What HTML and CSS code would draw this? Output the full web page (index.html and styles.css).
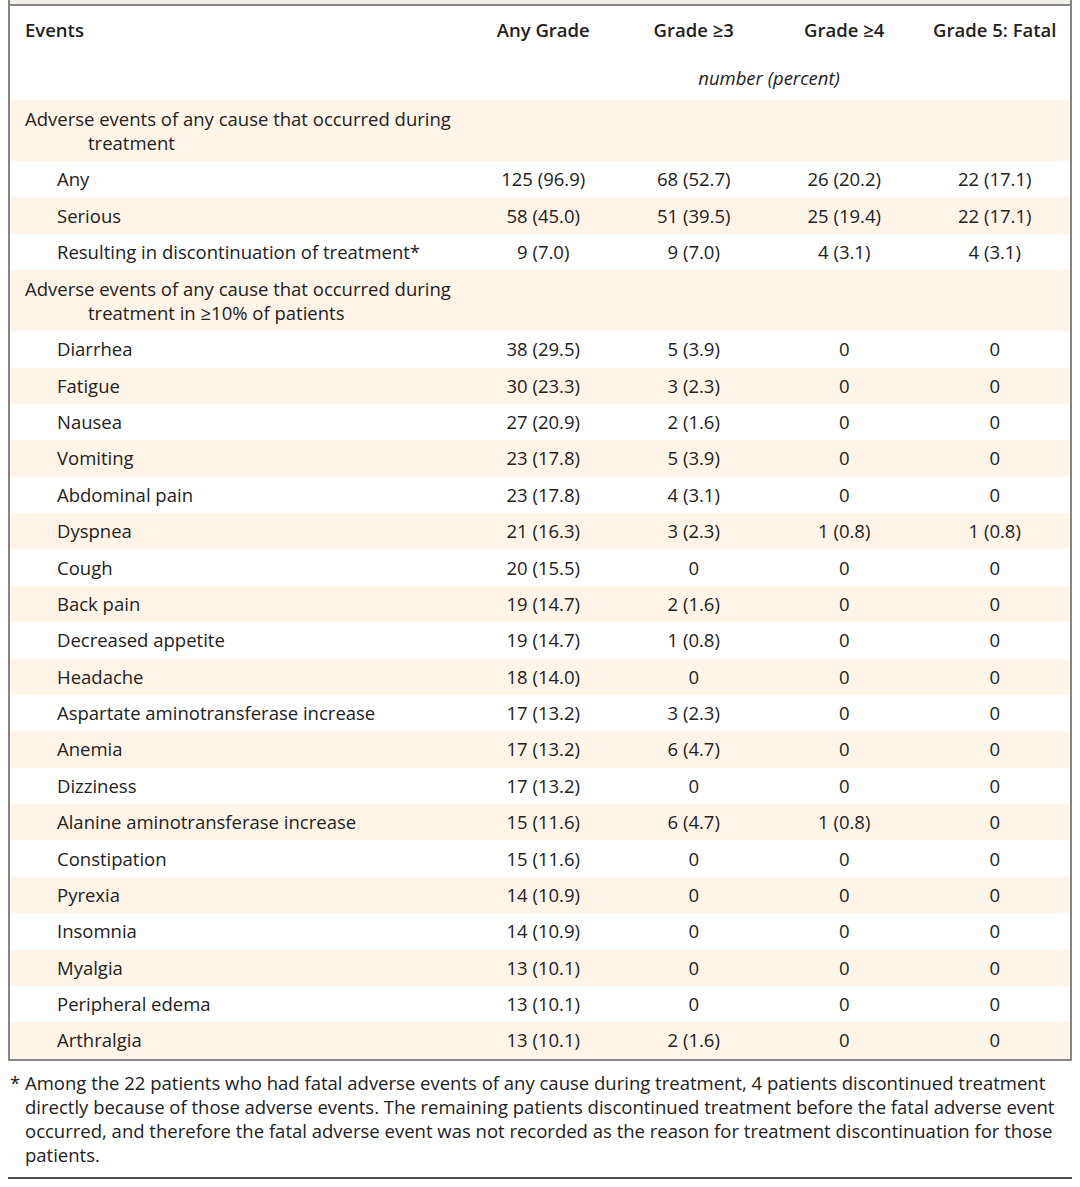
FILE: index.html
```html
<!DOCTYPE html>
<html>
<head>
<meta charset="utf-8">
<link rel="stylesheet" href="styles.css">
</head>
<body>
<div class="box">
  <div class="strip"></div>
  <table class="ae">
    <colgroup>
      <col class="c-label"><col class="c-num"><col class="c-num"><col class="c-num"><col class="c-num">
    </colgroup>
    <thead>
      <tr class="h1">
        <th class="lab">Events</th>
        <th>Any Grade</th>
        <th>Grade ≥3</th>
        <th>Grade ≥4</th>
        <th>Grade 5: Fatal</th>
      </tr>
      <tr class="h2">
        <th></th>
        <th colspan="4" class="unit">number (percent)</th>
      </tr>
    </thead>
    <tbody>
      <tr class="sec cream"><td class="lab" colspan="5">Adverse events of any cause that occurred during<br>treatment</td></tr>
      <tr><td class="sub">Any</td><td>125 (96.9)</td><td>68 (52.7)</td><td>26 (20.2)</td><td>22 (17.1)</td></tr>
      <tr class="cream"><td class="sub">Serious</td><td>58 (45.0)</td><td>51 (39.5)</td><td>25 (19.4)</td><td>22 (17.1)</td></tr>
      <tr><td class="sub">Resulting in discontinuation of treatment*</td><td>9 (7.0)</td><td>9 (7.0)</td><td>4 (3.1)</td><td>4 (3.1)</td></tr>
      <tr class="sec cream"><td class="lab" colspan="5">Adverse events of any cause that occurred during<br>treatment in ≥10% of patients</td></tr>
      <tr><td class="sub">Diarrhea</td><td>38 (29.5)</td><td>5 (3.9)</td><td>0</td><td>0</td></tr>
      <tr class="cream"><td class="sub">Fatigue</td><td>30 (23.3)</td><td>3 (2.3)</td><td>0</td><td>0</td></tr>
      <tr><td class="sub">Nausea</td><td>27 (20.9)</td><td>2 (1.6)</td><td>0</td><td>0</td></tr>
      <tr class="cream"><td class="sub">Vomiting</td><td>23 (17.8)</td><td>5 (3.9)</td><td>0</td><td>0</td></tr>
      <tr><td class="sub">Abdominal pain</td><td>23 (17.8)</td><td>4 (3.1)</td><td>0</td><td>0</td></tr>
      <tr class="cream"><td class="sub">Dyspnea</td><td>21 (16.3)</td><td>3 (2.3)</td><td>1 (0.8)</td><td>1 (0.8)</td></tr>
      <tr><td class="sub">Cough</td><td>20 (15.5)</td><td>0</td><td>0</td><td>0</td></tr>
      <tr class="cream"><td class="sub">Back pain</td><td>19 (14.7)</td><td>2 (1.6)</td><td>0</td><td>0</td></tr>
      <tr><td class="sub">Decreased appetite</td><td>19 (14.7)</td><td>1 (0.8)</td><td>0</td><td>0</td></tr>
      <tr class="cream"><td class="sub">Headache</td><td>18 (14.0)</td><td>0</td><td>0</td><td>0</td></tr>
      <tr><td class="sub">Aspartate aminotransferase increase</td><td>17 (13.2)</td><td>3 (2.3)</td><td>0</td><td>0</td></tr>
      <tr class="cream"><td class="sub">Anemia</td><td>17 (13.2)</td><td>6 (4.7)</td><td>0</td><td>0</td></tr>
      <tr><td class="sub">Dizziness</td><td>17 (13.2)</td><td>0</td><td>0</td><td>0</td></tr>
      <tr class="cream"><td class="sub">Alanine aminotransferase increase</td><td>15 (11.6)</td><td>6 (4.7)</td><td>1 (0.8)</td><td>0</td></tr>
      <tr><td class="sub">Constipation</td><td>15 (11.6)</td><td>0</td><td>0</td><td>0</td></tr>
      <tr class="cream"><td class="sub">Pyrexia</td><td>14 (10.9)</td><td>0</td><td>0</td><td>0</td></tr>
      <tr><td class="sub">Insomnia</td><td>14 (10.9)</td><td>0</td><td>0</td><td>0</td></tr>
      <tr class="cream"><td class="sub">Myalgia</td><td>13 (10.1)</td><td>0</td><td>0</td><td>0</td></tr>
      <tr><td class="sub">Peripheral edema</td><td>13 (10.1)</td><td>0</td><td>0</td><td>0</td></tr>
      <tr class="cream"><td class="sub">Arthralgia</td><td>13 (10.1)</td><td>2 (1.6)</td><td>0</td><td>0</td></tr>
    </tbody>
  </table>
</div>
<div class="foot">
  <p class="note"><span class="mark">*</span>Among the 22 patients who had fatal adverse events of any cause during treatment, 4 patients discontinued treatment<br>directly because of those adverse events. The remaining patients discontinued treatment before the fatal adverse event<br>occurred, and therefore the fatal adverse event was not recorded as the reason for treatment discontinuation for those<br>patients.</p>
</div>
</body>
</html>
```

FILE: styles.css
```css
html, body {
  margin: 0;
  padding: 0;
  background: #ffffff;
}
body {
  font-family: "Open Sans", "Noto Sans", sans-serif;
  font-size: 18.5px;
  line-height: 24px;
  color: #222222;
  padding: 0 8px;
}
.box {
  width: 1060px;
  border-left: 2px solid #858585;
  border-right: 2px solid #858585;
  border-bottom: 2px solid #858585;
}
.strip {
  height: 4px;
  background: #f1eee6;
  border-bottom: 2px solid #858585;
}
.ae {
  width: 100%;
  border-collapse: collapse;
  table-layout: fixed;
}
.c-label { width: 458px; }
.c-num { width: 150.5px; }
.ae th, .ae td {
  padding: 6.2px 0;
  text-align: center;
  font-weight: normal;
  vertical-align: middle;
  white-space: nowrap;
}
.ae .h1 th {
  font-weight: 600;
  padding-top: 12px;
  padding-bottom: 12px;
  vertical-align: top;
}
.ae .h2 th {
  padding-top: 12px;
  padding-bottom: 10px;
}
.ae th.unit {
  font-style: italic;
}
.ae th.lab {
  text-align: left;
  padding-left: 15px;
}
.ae td.sub {
  text-align: left;
  padding-left: 47px;
}
.ae .sec td {
  text-align: left;
  padding: 6.5px 0 6.5px 78px;
  text-indent: -63px;
}
.cream td {
  background: #fef5e8;
}
.foot {
  width: 1064px;
  border-bottom: 2px solid #4e4e4e;
  padding: 10px 0 10px 0;
  white-space: nowrap;
}
.note {
  margin: 0;
  padding-left: 17px;
  text-indent: -15px;
}
.mark {
  display: inline-block;
  width: 15px;
  text-indent: 0;
}
```
